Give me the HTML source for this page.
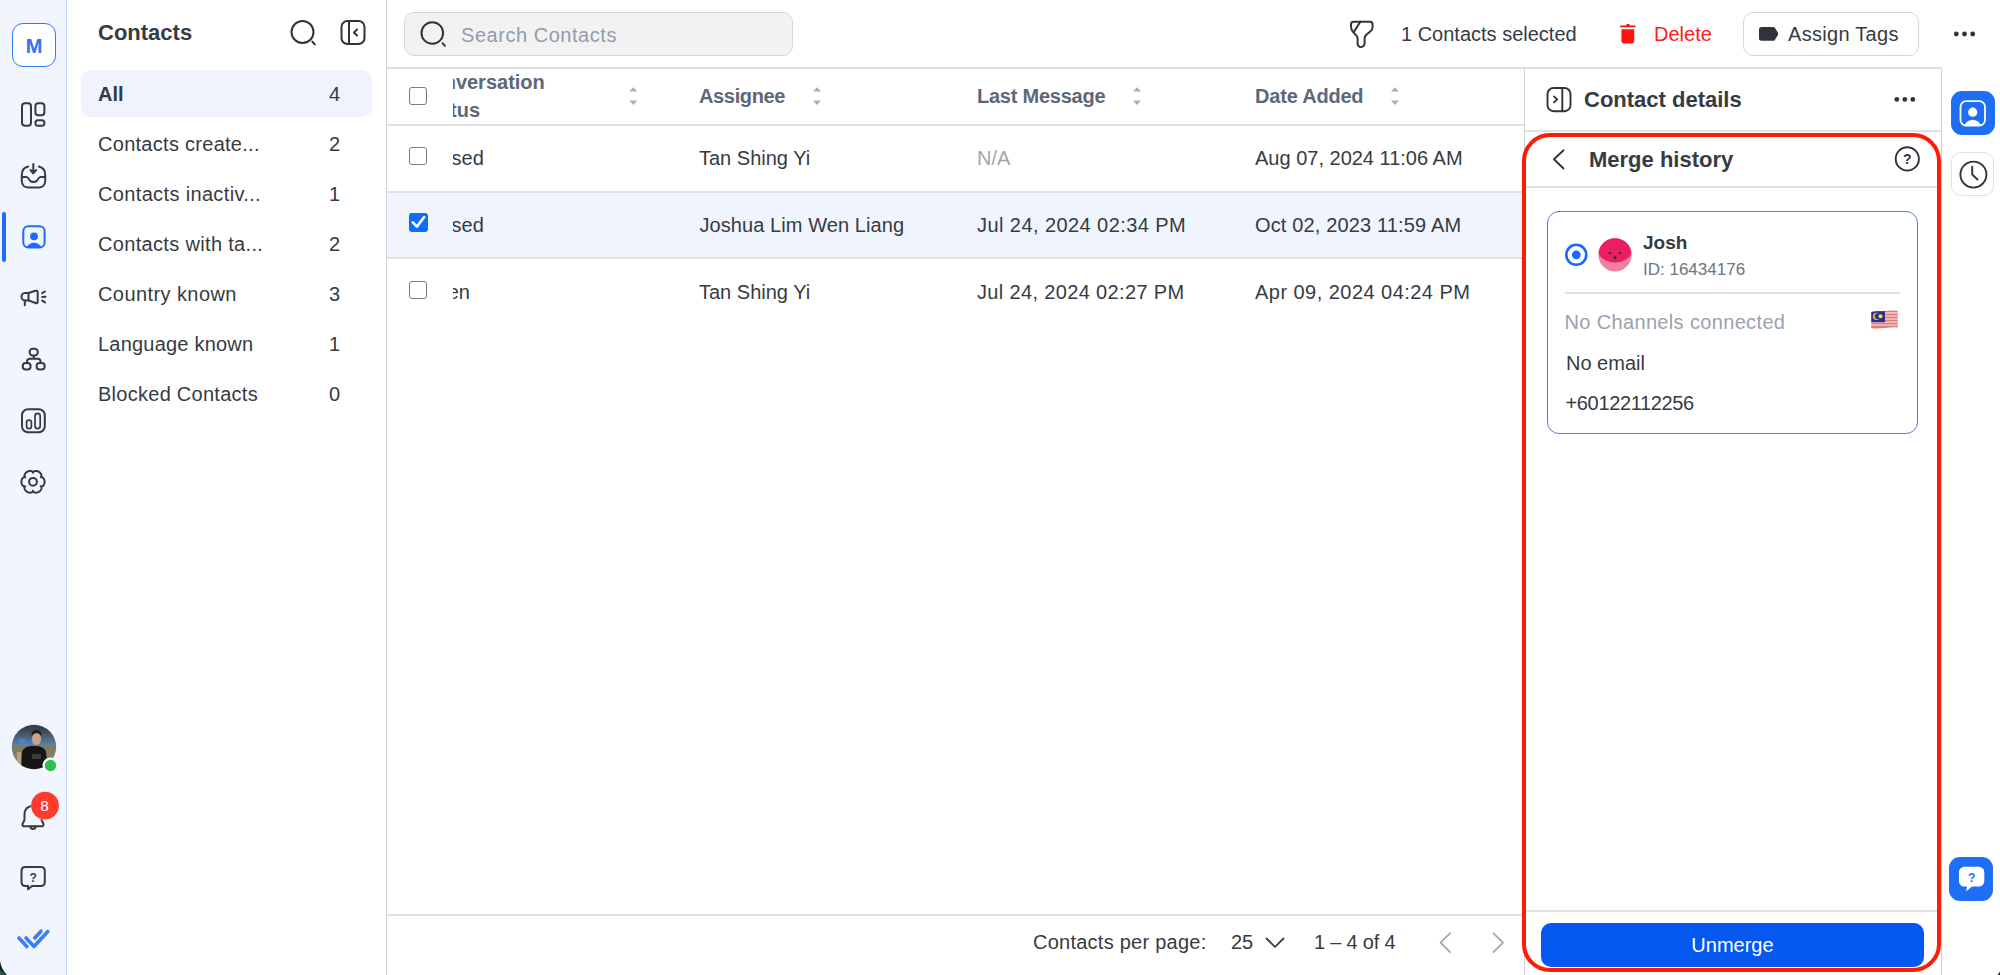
<!DOCTYPE html>
<html><head><meta charset="utf-8">
<style>
*{box-sizing:border-box;margin:0;padding:0}
html,body{width:2000px;height:975px;overflow:hidden;background:#fff;font-family:"Liberation Sans",sans-serif;color:#363b42}
.a{position:absolute;white-space:nowrap}
.t20{font-size:20px;line-height:20px}
.t22{font-size:22px;line-height:22px;font-weight:bold}
svg{position:absolute;overflow:visible}
.hl{position:absolute;height:2px;background:#dfe1e5}
.vl{position:absolute;width:1px;background:#dcdfe4}
</style></head><body>

<!-- left rail -->
<div class="a" style="left:0;top:0;width:67px;height:975px;background:#f0f5fe;border-right:1px solid #c3d8fc"></div>
<div class="a" style="left:12px;top:23px;width:44px;height:44px;border:1.5px solid #2f7bf6;border-radius:11px;background:#fff"></div>
<div class="a" style="left:12px;top:23px;width:44px;height:44px;text-align:center;font-size:20px;font-weight:bold;line-height:46px;color:#2e72f2">M</div>

<!-- contacts panel -->
<div class="a" style="left:386px;top:0;width:1px;height:975px;background:#cfd3d8"></div>
<div class="a t22" style="left:98px;top:22px">Contacts</div>
<div class="a" style="left:81px;top:70px;width:291px;height:47px;background:#eef3fc;border-radius:10px"></div>
<div class="a t20" style="left:98px;top:84px;font-weight:bold">All</div>
<div class="a t20" style="left:329px;top:84px">4</div>
<div class="a t20" style="left:98px;top:134px;letter-spacing:0.28px">Contacts create...</div>
<div class="a t20" style="left:329px;top:134px">2</div>
<div class="a t20" style="left:98px;top:184px;letter-spacing:0.35px">Contacts inactiv...</div>
<div class="a t20" style="left:329px;top:184px">1</div>
<div class="a t20" style="left:98px;top:234px;letter-spacing:0.33px">Contacts with ta...</div>
<div class="a t20" style="left:329px;top:234px">2</div>
<div class="a t20" style="left:98px;top:284px;letter-spacing:0.42px">Country known</div>
<div class="a t20" style="left:329px;top:284px">3</div>
<div class="a t20" style="left:98px;top:334px;letter-spacing:0.21px">Language known</div>
<div class="a t20" style="left:329px;top:334px">1</div>
<div class="a t20" style="left:98px;top:384px;letter-spacing:0.27px">Blocked Contacts</div>
<div class="a t20" style="left:329px;top:384px">0</div>

<!-- top bar -->
<div class="a" style="left:404px;top:12px;width:389px;height:44px;background:#f2f2f3;border:1px solid #d3d7dd;border-radius:10px"></div>
<div class="a t20" style="left:461px;top:25px;color:#919cab;letter-spacing:0.54px">Search Contacts</div>
<div class="a t20" style="left:1401px;top:24px">1 Contacts selected</div>
<div class="a t20" style="left:1654px;top:24px;color:#ff1b1b">Delete</div>
<div class="a" style="left:1743px;top:12px;width:176px;height:43.5px;border:1px solid #d3d7dd;border-radius:10px"></div>
<div class="a t20" style="left:1788px;top:24px;letter-spacing:0.3px">Assign Tags</div>
<div class="hl" style="left:387px;top:67px;width:1554px"></div>

<!-- table -->
<div class="hl" style="left:387px;top:124px;width:1137px"></div>
<div class="a" style="left:387px;top:192px;width:1137px;height:66px;background:#eff4fd"></div>
<div class="hl" style="left:387px;top:191px;width:1137px"></div>
<div class="hl" style="left:387px;top:257px;width:1137px"></div>
<div class="hl" style="left:387px;top:914px;width:1137px"></div>

<div class="a" style="left:453px;top:70px;width:200px;height:250px;overflow:hidden">
  <div class="a t20" style="left:-36px;top:2px;font-weight:bold;color:#5c6879">Conversation</div>
  <div class="a t20" style="left:-34px;top:30px;font-weight:bold;color:#5c6879">Status</div>
  <div class="a t20" style="left:-31.5px;top:78px">Closed</div>
  <div class="a t20" style="left:-31.5px;top:145px">Closed</div>
  <div class="a t20" style="left:-32px;top:212px">Open</div>
</div>
<div class="a t20" style="left:699px;top:86px;font-weight:bold;color:#5c6879;letter-spacing:-0.35px">Assignee</div>
<div class="a t20" style="left:977px;top:86px;font-weight:bold;color:#5c6879;letter-spacing:-0.24px">Last Message</div>
<div class="a t20" style="left:1255px;top:86px;font-weight:bold;color:#5c6879;letter-spacing:-0.2px">Date Added</div>

<div class="a t20" style="left:699px;top:148px">Tan Shing Yi</div>
<div class="a t20" style="left:977px;top:148px;color:#a0a6ae">N/A</div>
<div class="a t20" style="left:1255px;top:148px">Aug 07, 2024 11:06 AM</div>
<div class="a t20" style="left:699.5px;top:215px;letter-spacing:0.08px">Joshua Lim Wen Liang</div>
<div class="a t20" style="left:977px;top:215px;letter-spacing:0.43px">Jul 24, 2024 02:34 PM</div>
<div class="a t20" style="left:1255px;top:215px;letter-spacing:0.15px">Oct 02, 2023 11:59 AM</div>
<div class="a t20" style="left:699px;top:282px">Tan Shing Yi</div>
<div class="a t20" style="left:977px;top:282px;letter-spacing:0.35px">Jul 24, 2024 02:27 PM</div>
<div class="a t20" style="left:1255px;top:282px;letter-spacing:0.46px">Apr 09, 2024 04:24 PM</div>

<!-- checkboxes -->
<div class="a" style="left:409px;top:87px;width:18px;height:18px;border:1.5px solid #7b7b7b;border-radius:3px;background:#fff"></div>
<div class="a" style="left:409px;top:147px;width:18px;height:18px;border:1.5px solid #7b7b7b;border-radius:3px;background:#fff"></div>
<div class="a" style="left:409px;top:213px;width:18.5px;height:18.5px;border-radius:3px;background:#0e6ef9"></div>
<div class="a" style="left:409px;top:281px;width:18px;height:18px;border:1.5px solid #7b7b7b;border-radius:3px;background:#fff"></div>

<!-- footer -->
<div class="a t20" style="left:1033px;top:932px;letter-spacing:0.25px">Contacts per page:</div>
<div class="a t20" style="left:1231px;top:932px">25</div>
<div class="a t20" style="left:1314px;top:932px;letter-spacing:-0.2px">1 – 4 of 4</div>

<!-- right panel -->
<div class="a" style="left:1524px;top:68px;width:1px;height:907px;background:#cfd3d8"></div>
<div class="a" style="left:1941px;top:68px;width:1px;height:907px;background:#cfd3d8"></div>
<div class="a t22" style="left:1584px;top:89px">Contact details</div>
<div class="hl" style="left:1525px;top:130px;width:416px"></div>
<div class="a t22" style="left:1589px;top:149px">Merge history</div>
<div class="hl" style="left:1525px;top:186px;width:416px"></div>

<div class="a" style="left:1547px;top:211px;width:371px;height:223px;border:1.5px solid #3f80f4;border-radius:12px"></div>
<div class="a t20" style="left:1643px;top:233px;font-weight:bold;font-size:19px">Josh</div>
<div class="a t20" style="left:1643px;top:260px;font-size:17px;color:#6b7583">ID: 16434176</div>
<div class="hl" style="left:1565px;top:292px;width:335px"></div>
<div class="a t20" style="left:1564.5px;top:312px;color:#9aa2ac;letter-spacing:0.35px">No Channels connected</div>
<div class="a t20" style="left:1566px;top:353px">No email</div>
<div class="a t20" style="left:1565.5px;top:393px;letter-spacing:-0.35px">+60122112256</div>

<div class="hl" style="left:1525px;top:910px;width:416px"></div>
<div class="a" style="left:1541px;top:923px;width:383px;height:44px;background:#0558ef;border-radius:10px;color:#fff;text-align:center;font-size:20px;line-height:44px">Unmerge</div>

<div class="a" style="left:1522px;top:133px;width:419px;height:839px;border:4px solid #fd1c08;border-radius:28px"></div>

<!-- right column -->
<div class="a" style="left:1951px;top:91px;width:44px;height:44px;background:#1f6ef6;border-radius:11px"></div>
<div class="a" style="left:1951px;top:152px;width:43px;height:44px;border:1px solid #dde0e5;border-radius:10px"></div>
<div class="a" style="left:1949px;top:857px;width:44px;height:44px;background:#1f6ef6;border-radius:11px"></div>


<svg width="2000" height="975" style="left:0;top:0" viewBox="0 0 2000 975">
<g fill="none" stroke="#363b42" stroke-width="2" stroke-linecap="round" stroke-linejoin="round">
  <!-- dashboard -->
  <rect x="22" y="103.3" width="9" height="22.5" rx="3"/>
  <rect x="35.4" y="103.3" width="9" height="12" rx="3"/>
  <rect x="35.4" y="120.2" width="9" height="5.6" rx="2.5"/>
  <!-- inbox -->
  <path d="M28.2,166.5 C24.3,167.3 21.8,170.5 21.8,175 L21.8,181 C21.8,184.8 24.6,187.5 28.5,187.5 L38.5,187.5 C42.4,187.5 45.2,184.8 45.2,181 L45.2,175 C45.2,170.5 42.7,167.3 38.8,166.5"/>
  <path d="M21.8,177 L26.5,177 C28,177 28.5,178 29.5,180 C30.3,181.5 31.3,182 33.5,182 C35.7,182 36.7,181.5 37.5,180 C38.5,178 39,177 40.5,177 L45.2,177"/>
  <path d="M33.3,164 L33.3,172.5"/>
  <path d="M30.5,170 L33.3,173.3 L36.1,170" fill="#363b42"/>
  <!-- broadcast -->
  <path d="M28.5,293 L25,293 C22.8,293 21.5,295 21.5,296.8 C21.5,298.8 23,300.4 25,300.4 L28.5,300.4 Z"/>
  <path d="M28.5,293 L35.5,290.8 C36.8,290.4 37.7,291 37.7,292.2 L37.7,301.8 C37.7,303 36.8,303.6 35.5,303 L28.5,300.4"/>
  <path d="M24.8,300.8 L24.8,305.3"/>
  <path d="M42.2,293.2 L45,291.5 M42.2,296.9 L45.5,296.7 M42.2,300.6 L45,302.4"/>
  <!-- workflows -->
  <rect x="29.6" y="348.8" width="8.2" height="6.6" rx="3.2"/>
  <rect x="22.7" y="363.1" width="7.9" height="6.5" rx="3.1"/>
  <rect x="36.6" y="363.1" width="8.1" height="6.5" rx="3.1"/>
  <path d="M33.7,356.4 L33.7,358.8 M27,361.6 C27,359.8 28,358.8 30,358.8 L37.6,358.8 C39.6,358.8 40.6,359.8 40.6,361.6"/>
  <!-- reports -->
  <rect x="22" y="409.3" width="22.8" height="23" rx="6"/>
  <rect x="26.6" y="420" width="4.8" height="8.6" rx="2.4" stroke-width="1.7"/>
  <rect x="35" y="413.3" width="5.2" height="15.3" rx="2.6" stroke-width="1.7"/>
  <!-- gear -->
  <path d="M44.60,481.80 L44.60,481.60 L44.59,481.40 L44.57,481.19 L44.55,480.99 L44.52,480.79 L44.48,480.59 L44.43,480.40 L44.38,480.20 L44.33,480.01 L44.26,479.81 L44.19,479.62 L44.12,479.44 L44.03,479.25 L43.94,479.07 L43.84,478.89 L43.74,478.72 L43.63,478.55 L43.51,478.39 L43.38,478.23 L43.25,478.07 L43.10,477.92 L42.95,477.78 L42.79,477.64 L42.62,477.52 L42.44,477.40 L42.24,477.29 L42.02,477.20 L41.78,477.13 L41.47,477.10 L40.79,477.30 L41.31,476.81 L41.43,476.53 L41.49,476.28 L41.52,476.05 L41.53,475.83 L41.52,475.61 L41.50,475.40 L41.46,475.19 L41.41,474.99 L41.35,474.79 L41.29,474.60 L41.21,474.41 L41.13,474.22 L41.04,474.04 L40.94,473.86 L40.83,473.69 L40.72,473.52 L40.60,473.36 L40.48,473.19 L40.35,473.04 L40.22,472.89 L40.08,472.74 L39.93,472.60 L39.78,472.46 L39.63,472.33 L39.47,472.20 L39.31,472.08 L39.14,471.97 L38.97,471.86 L38.80,471.75 L38.62,471.66 L38.44,471.56 L38.26,471.48 L38.07,471.40 L37.89,471.32 L37.69,471.26 L37.50,471.20 L37.31,471.14 L37.11,471.09 L36.91,471.05 L36.71,471.02 L36.51,470.99 L36.31,470.97 L36.11,470.96 L35.91,470.96 L35.70,470.96 L35.50,470.97 L35.30,470.99 L35.09,471.02 L34.89,471.06 L34.69,471.11 L34.49,471.17 L34.30,471.24 L34.10,471.32 L33.91,471.42 L33.72,471.54 L33.53,471.69 L33.35,471.86 L33.17,472.11 L33.00,472.80 L32.83,472.11 L32.65,471.86 L32.47,471.69 L32.28,471.54 L32.09,471.42 L31.90,471.32 L31.70,471.24 L31.51,471.17 L31.31,471.11 L31.11,471.06 L30.91,471.02 L30.70,470.99 L30.50,470.97 L30.30,470.96 L30.09,470.96 L29.89,470.96 L29.69,470.97 L29.49,470.99 L29.29,471.02 L29.09,471.05 L28.89,471.09 L28.69,471.14 L28.50,471.20 L28.31,471.26 L28.11,471.32 L27.93,471.40 L27.74,471.48 L27.56,471.56 L27.38,471.66 L27.20,471.75 L27.03,471.86 L26.86,471.97 L26.69,472.08 L26.53,472.20 L26.37,472.33 L26.22,472.46 L26.07,472.60 L25.92,472.74 L25.78,472.89 L25.65,473.04 L25.52,473.19 L25.40,473.36 L25.28,473.52 L25.17,473.69 L25.06,473.86 L24.96,474.04 L24.87,474.22 L24.79,474.41 L24.71,474.60 L24.65,474.79 L24.59,474.99 L24.54,475.19 L24.50,475.40 L24.48,475.61 L24.47,475.83 L24.48,476.05 L24.51,476.28 L24.57,476.53 L24.69,476.81 L25.21,477.30 L24.53,477.10 L24.22,477.13 L23.98,477.20 L23.76,477.29 L23.56,477.40 L23.38,477.52 L23.21,477.64 L23.05,477.78 L22.90,477.92 L22.75,478.07 L22.62,478.23 L22.49,478.39 L22.37,478.55 L22.26,478.72 L22.16,478.89 L22.06,479.07 L21.97,479.25 L21.88,479.44 L21.81,479.62 L21.74,479.81 L21.67,480.01 L21.62,480.20 L21.57,480.40 L21.52,480.59 L21.48,480.79 L21.45,480.99 L21.43,481.19 L21.41,481.40 L21.40,481.60 L21.40,481.80 L21.40,482.00 L21.41,482.20 L21.43,482.41 L21.45,482.61 L21.48,482.81 L21.52,483.01 L21.57,483.20 L21.62,483.40 L21.67,483.59 L21.74,483.79 L21.81,483.98 L21.88,484.16 L21.97,484.35 L22.06,484.53 L22.16,484.71 L22.26,484.88 L22.37,485.05 L22.49,485.21 L22.62,485.37 L22.75,485.53 L22.90,485.68 L23.05,485.82 L23.21,485.96 L23.38,486.08 L23.56,486.20 L23.76,486.31 L23.98,486.40 L24.22,486.47 L24.53,486.50 L25.21,486.30 L24.69,486.79 L24.57,487.07 L24.51,487.32 L24.48,487.55 L24.47,487.77 L24.48,487.99 L24.50,488.20 L24.54,488.41 L24.59,488.61 L24.65,488.81 L24.71,489.00 L24.79,489.19 L24.87,489.38 L24.96,489.56 L25.06,489.74 L25.17,489.91 L25.28,490.08 L25.40,490.24 L25.52,490.41 L25.65,490.56 L25.78,490.71 L25.92,490.86 L26.07,491.00 L26.22,491.14 L26.37,491.27 L26.53,491.40 L26.69,491.52 L26.86,491.63 L27.03,491.74 L27.20,491.85 L27.38,491.94 L27.56,492.04 L27.74,492.12 L27.93,492.20 L28.11,492.28 L28.31,492.34 L28.50,492.40 L28.69,492.46 L28.89,492.51 L29.09,492.55 L29.29,492.58 L29.49,492.61 L29.69,492.63 L29.89,492.64 L30.09,492.64 L30.30,492.64 L30.50,492.63 L30.70,492.61 L30.91,492.58 L31.11,492.54 L31.31,492.49 L31.51,492.43 L31.70,492.36 L31.90,492.28 L32.09,492.18 L32.28,492.06 L32.47,491.91 L32.65,491.74 L32.83,491.49 L33.00,490.80 L33.17,491.49 L33.35,491.74 L33.53,491.91 L33.72,492.06 L33.91,492.18 L34.10,492.28 L34.30,492.36 L34.49,492.43 L34.69,492.49 L34.89,492.54 L35.09,492.58 L35.30,492.61 L35.50,492.63 L35.70,492.64 L35.91,492.64 L36.11,492.64 L36.31,492.63 L36.51,492.61 L36.71,492.58 L36.91,492.55 L37.11,492.51 L37.31,492.46 L37.50,492.40 L37.69,492.34 L37.89,492.28 L38.07,492.20 L38.26,492.12 L38.44,492.04 L38.62,491.94 L38.80,491.85 L38.97,491.74 L39.14,491.63 L39.31,491.52 L39.47,491.40 L39.63,491.27 L39.78,491.14 L39.93,491.00 L40.08,490.86 L40.22,490.71 L40.35,490.56 L40.48,490.41 L40.60,490.24 L40.72,490.08 L40.83,489.91 L40.94,489.74 L41.04,489.56 L41.13,489.38 L41.21,489.19 L41.29,489.00 L41.35,488.81 L41.41,488.61 L41.46,488.41 L41.50,488.20 L41.52,487.99 L41.53,487.77 L41.52,487.55 L41.49,487.32 L41.43,487.07 L41.31,486.79 L40.79,486.30 L41.47,486.50 L41.78,486.47 L42.02,486.40 L42.24,486.31 L42.44,486.20 L42.62,486.08 L42.79,485.96 L42.95,485.82 L43.10,485.68 L43.25,485.53 L43.38,485.37 L43.51,485.21 L43.63,485.05 L43.74,484.88 L43.84,484.71 L43.94,484.53 L44.03,484.35 L44.12,484.16 L44.19,483.98 L44.26,483.79 L44.33,483.59 L44.38,483.40 L44.43,483.20 L44.48,483.01 L44.52,482.81 L44.55,482.61 L44.57,482.41 L44.59,482.20 L44.60,482.00Z"/>
  <circle cx="33" cy="481.8" r="3.9"/>
  <!-- bell -->
  <path d="M33,806 C27,806 24.5,810 24.5,815 L24.5,819 C24.5,821.5 22.8,822.5 22.5,824 C22.2,825.5 23,826.3 24.5,826.3 L41.5,826.3 C43,826.3 43.8,825.5 43.5,824 C43.2,822.5 41.5,821.5 41.5,819"/>
  <path d="M30.3,826.5 C30.6,828.2 31.6,829 33,829 C34.4,829 35.4,828.2 35.7,826.5"/>
  <!-- help bubble -->
  <path d="M25.5,867 L40.8,867 C43.2,867 44.8,868.6 44.8,871 L44.8,882 C44.8,884.4 43.2,886 40.8,886 L32,886 L28,889.3 L28,886 L25.5,886 C23.1,886 21.5,884.4 21.5,882 L21.5,871 C21.5,868.6 23.1,867 25.5,867 Z"/>
</g>
<!-- contacts active icon -->
<g fill="none" stroke="#1f6bff" stroke-width="2">
  <rect x="23.3" y="226.3" width="21.3" height="21.3" rx="5"/>
</g>
<circle cx="34" cy="236.3" r="3.9" fill="#1f6bff"/>
<path d="M26.5,247.6 C28,244.5 30.8,242.8 34,242.8 C37.2,242.8 40,244.5 41.5,247.6 Z" fill="#1f6bff"/>
<rect x="2" y="212" width="4" height="50" rx="2" fill="#1f6bff"/>
<!-- help ? -->
<text x="33.2" y="881.5" font-family="Liberation Sans" font-size="12" font-weight="bold" fill="#363b42" text-anchor="middle">?</text>
<!-- logo checks -->
<g fill="none" stroke="#3d7ef6" stroke-width="3.6" stroke-linecap="round" stroke-linejoin="round">
  <path d="M19,938 L26.8,946.5"/>
  <path d="M26,938 L34,946.5 L47.8,931.5"/>
  <path d="M34.8,938 L41,931.2"/>
</g>
<!-- bell badge -->
<circle cx="45" cy="805.8" r="14" fill="#fff"/>
<circle cx="45" cy="805.6" r="13.9" fill="#ff3b30"/>
<text x="44.6" y="811.3" font-family="Liberation Sans" font-size="15.5" fill="#fff" text-anchor="middle">8</text>
</svg>


<svg width="2000" height="975" style="left:0;top:0" viewBox="0 0 2000 975">
<defs>
  <clipPath id="avc"><circle cx="34" cy="747" r="22.2"/></clipPath>
  <linearGradient id="avbg" x1="0" y1="0" x2="0" y2="1">
    <stop offset="0" stop-color="#2c3440"/>
    <stop offset="0.35" stop-color="#5a6a78"/>
    <stop offset="0.45" stop-color="#5f7f9a"/>
    <stop offset="0.5" stop-color="#7c7c62"/>
    <stop offset="1" stop-color="#8d8a6c"/>
  </linearGradient>
</defs>
<filter id="avb" x="-10%" y="-10%" width="120%" height="120%"><feGaussianBlur stdDeviation="0.7"/></filter>
<g clip-path="url(#avc)"><g filter="url(#avb)">
  <rect x="11" y="724" width="46" height="46" fill="url(#avbg)"/>
  <rect x="11" y="738" width="46" height="4" fill="#4d6fa0" opacity="0.6"/>
  <ellipse cx="22" cy="741" rx="4" ry="2" fill="#3a8af0" opacity="0.8"/>
  <ellipse cx="31" cy="742" rx="3" ry="1.6" fill="#3a7ae8" opacity="0.8"/>
  <path d="M21,770 L22,752 C23,748 27,746.5 32,746 L36,746 C41,746.5 45,748 46,752 L48,770 Z" fill="#121212"/>
  <ellipse cx="36.5" cy="739" rx="4.6" ry="6" fill="#c9a48a"/>
  <path d="M31.5,736 C31.5,731 34,730 36.5,730 C39.5,730 41.5,731.5 41.5,736 C40,733.5 38,733 36.5,733 C34.5,733 33,734 31.5,736 Z" fill="#1a1a1a"/>
  <rect x="32" y="754" width="9" height="5" fill="#555" opacity="0.6"/>
  <rect x="17" y="752" width="4" height="16" fill="#c9a48a" opacity="0.8"/>
</g></g>
<circle cx="50.5" cy="765.5" r="8" fill="#fff"/>
<circle cx="50.5" cy="765.5" r="5.7" fill="#2ec04f"/>
</svg>


<svg width="2000" height="975" style="left:0;top:0" viewBox="0 0 2000 975">
<g fill="none" stroke="#2f343b" stroke-width="2" stroke-linecap="round" stroke-linejoin="round">
  <!-- panel search -->
  <circle cx="302.5" cy="32" r="11"/>
  <path d="M312.3,41.6 L314.8,44.4"/>
  <!-- collapse -->
  <rect x="341.5" y="21" width="23" height="23" rx="6"/>
  <path d="M349,21 L349,44"/>
  <path d="M357,29.5 L354,32.5 L357,35.5"/>
  <!-- main search -->
  <circle cx="432.3" cy="33" r="10.8"/>
  <path d="M442.6,43.2 L444.9,45.8"/>
  <!-- filter -->
  <path d="M1353.5,21.8 L1370.3,21.8 C1372,21.8 1372.6,23 1372.6,24.5 L1372.6,27 C1372.6,29 1371.8,30.2 1370.5,31.3 L1366.3,34.8 C1365,36 1364.6,37 1364.6,38.5 L1364.6,43.5 C1364.6,45 1363.8,46 1362.5,46.7 C1360.5,47.6 1358,46.8 1357.6,44.2 L1357.6,38.3 C1357.6,37 1357,36 1356,35.2 L1352.8,31.5 C1351.5,30 1351,28.7 1351,26.5 L1351,24.5 C1351,22.8 1351.8,21.8 1353.5,21.8 Z"/>
  <path d="M1360.3,21.8 L1354.3,31.3"/>
  <!-- top dots -->
</g>
<g fill="#2f343b">
  <circle cx="1956.3" cy="34" r="2.4"/><circle cx="1964.5" cy="34" r="2.4"/><circle cx="1972.7" cy="34" r="2.4"/>
  <circle cx="1896.8" cy="99.4" r="2.4"/><circle cx="1904.8" cy="99.4" r="2.4"/><circle cx="1912.8" cy="99.4" r="2.4"/>
  <!-- tag -->
  <path d="M1761.3,27 L1773.3,27 C1774.3,27 1774.8,27.6 1775.2,28.3 L1778,32.8 C1778.4,33.5 1778.4,34.1 1778,34.8 L1775.2,39.4 C1774.8,40.1 1774.3,40.7 1773.3,40.7 L1761.3,40.7 C1760,40.7 1759,39.7 1759,38.4 L1759,29.3 C1759,28 1760,27 1761.3,27 Z"/>
</g>
<!-- trash -->
<g fill="#ff1410">
  <path d="M1620.6,25.6 L1625.6,25.6 C1626,24.6 1626.8,24 1628,24 C1629.2,24 1630,24.6 1630.4,25.6 L1635,25.6 C1635.4,25.6 1635.6,26 1635.6,26.4 L1635.6,27.3 L1620,27.3 L1620,26.4 C1620,26 1620.2,25.6 1620.6,25.6 Z"/>
  <path d="M1621.4,29.2 L1634.2,29.2 L1634.2,41 C1634.2,42.4 1633.2,43.4 1631.8,43.4 L1623.8,43.4 C1622.4,43.4 1621.4,42.4 1621.4,41 Z"/>
</g>
<!-- sort arrows -->
<g fill="#a9aeb5">
  <path d="M629.3,91.5 L633.3,87.2 L637.3,91.5 Z"/><path d="M629.3,100.6 L633.3,105 L637.3,100.6 Z"/>
  <path d="M813,91.5 L817,87.2 L821,91.5 Z"/><path d="M813,100.6 L817,105 L821,100.6 Z"/>
  <path d="M1133,91.5 L1137,87.2 L1141,91.5 Z"/><path d="M1133,100.6 L1137,105 L1141,100.6 Z"/>
  <path d="M1391,91.5 L1395,87.2 L1399,91.5 Z"/><path d="M1391,100.6 L1395,105 L1399,100.6 Z"/>
</g>
<!-- checkmark -->
<path d="M412.8,222.3 L416.9,226.6 L424.2,217" fill="none" stroke="#fff" stroke-width="2.6" stroke-linecap="round" stroke-linejoin="round"/>
<!-- pagination -->
<g fill="none" stroke-width="1.8" stroke-linecap="round" stroke-linejoin="round">
  <path d="M1266.5,938.5 L1275,946.8 L1283.5,938.5" stroke="#3a3f45"/>
  <path d="M1450,933.3 L1440.5,942.6 L1450,952" stroke="#a3a9b0"/>
  <path d="M1493.5,933.3 L1503,942.6 L1493.5,952" stroke="#a3a9b0"/>
</g>
<!-- contact details icon -->
<g fill="none" stroke="#2f343b" stroke-width="1.9" stroke-linecap="round" stroke-linejoin="round">
  <rect x="1547.5" y="88" width="23" height="23.2" rx="6"/>
  <path d="M1562.3,88 L1562.3,111.2"/>
  <path d="M1554,96.4 L1557.2,99.4 L1554,102.4"/>
  <!-- back chevron -->
  <path d="M1563.5,150.3 L1554,159.3 L1563.5,168.5"/>
  <!-- help circle -->
  <circle cx="1907.3" cy="158.9" r="11.6"/>
</g>
<text x="1907.3" y="164" font-family="Liberation Sans" font-size="14" font-weight="bold" fill="#2f343b" text-anchor="middle">?</text>
<!-- radio -->
<circle cx="1576.3" cy="254.8" r="10" fill="none" stroke="#1a66ff" stroke-width="2.6"/>
<circle cx="1576.3" cy="254.8" r="4.4" fill="#1a66ff"/>
<!-- pink avatar -->
<defs><clipPath id="pk"><circle cx="1615" cy="254.8" r="16.6"/></clipPath></defs>
<g clip-path="url(#pk)">
  <rect x="1598" y="238" width="34" height="34" fill="#f07fa0"/>
  <ellipse cx="1615" cy="250" rx="17" ry="12.4" fill="#e91e63"/>
</g>
<g fill="#3a2a3a">
  <rect x="1608.5" y="252" width="2.6" height="2" rx="1"/>
  <rect x="1618.5" y="252" width="2.6" height="2" rx="1"/>
  <rect x="1613.6" y="256.3" width="2.8" height="2.8" rx="0.8" fill="#0c3c3a"/>
</g>
<!-- flag -->
<defs><clipPath id="fl"><path d="M1871.3,312 C1876,310.5 1880,311.5 1885,311 C1890,310.5 1894,310.3 1897.7,311 L1897.7,327.6 C1893,327 1889,327.5 1884,328 C1879,328.5 1875,329 1871.3,328.6 Z"/></clipPath></defs>
<g clip-path="url(#fl)">
  <rect x="1871" y="310" width="27" height="20" fill="#f4c5c2"/>
  <rect x="1871" y="310.5" width="27" height="1.6" fill="#e07d78"/>
  <rect x="1871" y="313.8" width="27" height="1.5" fill="#e07d78"/>
  <rect x="1871" y="316.8" width="27" height="1.5" fill="#e07d78"/>
  <rect x="1871" y="319.8" width="27" height="1.5" fill="#e07d78"/>
  <rect x="1871" y="322.8" width="27" height="1.5" fill="#e07d78"/>
  <rect x="1871" y="325.8" width="27" height="2.5" fill="#e07d78"/>
  <rect x="1871" y="310" width="14" height="12.2" fill="#2a2f8f"/>
  <circle cx="1876.5" cy="316.3" r="3.6" fill="#e8c23a"/>
  <circle cx="1877.8" cy="316.3" r="3" fill="#2a2f8f"/>
  <circle cx="1880.5" cy="316.3" r="2" fill="#f2dd3a"/>
</g>
<!-- right column icons -->
<g fill="none" stroke="#fff" stroke-width="1.8">
  <rect x="1960.5" y="101.2" width="24.5" height="24.3" rx="5.5"/>
</g>
<circle cx="1972.7" cy="112.2" r="4.6" fill="#fff"/>
<path d="M1964.5,125.5 C1966,121.8 1969,119.7 1972.7,119.7 C1976.4,119.7 1979.4,121.8 1980.9,125.5 Z" fill="#fff"/>
<g fill="none" stroke="#2f343b" stroke-width="1.9" stroke-linecap="round" stroke-linejoin="round">
  <circle cx="1973.4" cy="174.6" r="13"/>
  <path d="M1972.2,166.8 L1972.2,174.5 L1977.5,179.5"/>
</g>
<path d="M1965,866.8 L1978.3,866.8 C1982,866.8 1984.3,869 1984.3,872.5 L1984.3,881 C1984.3,884.5 1982,886.6 1978.3,886.6 L1972,886.6 L1966.2,891.3 L1967,886.6 L1965,886.6 C1961.3,886.6 1959,884.5 1959,881 L1959,872.5 C1959,869 1961.3,866.8 1965,866.8 Z" fill="#fff"/>
<text x="1971.6" y="881.5" font-family="Liberation Sans" font-size="12" font-weight="bold" fill="#1f6ef6" text-anchor="middle">?</text>
</svg>

<svg width="2000" height="975" style="left:0;top:0" viewBox="0 0 2000 975">
<path d="M0,961 L0,975 L7,975 C3.5,971.5 1,967 0,961 Z" fill="#0c1f18"/>
<path d="M0,969 L0,975 L6,975 C3.5,973 1.5,971.5 0,969 Z" fill="#2a5a45"/>
<path d="M2000,971.3 L2000,975 L1997.3,975 C1998.6,974 1999.5,972.8 2000,971.3 Z" fill="#16302a"/>
</svg>
</body></html>
